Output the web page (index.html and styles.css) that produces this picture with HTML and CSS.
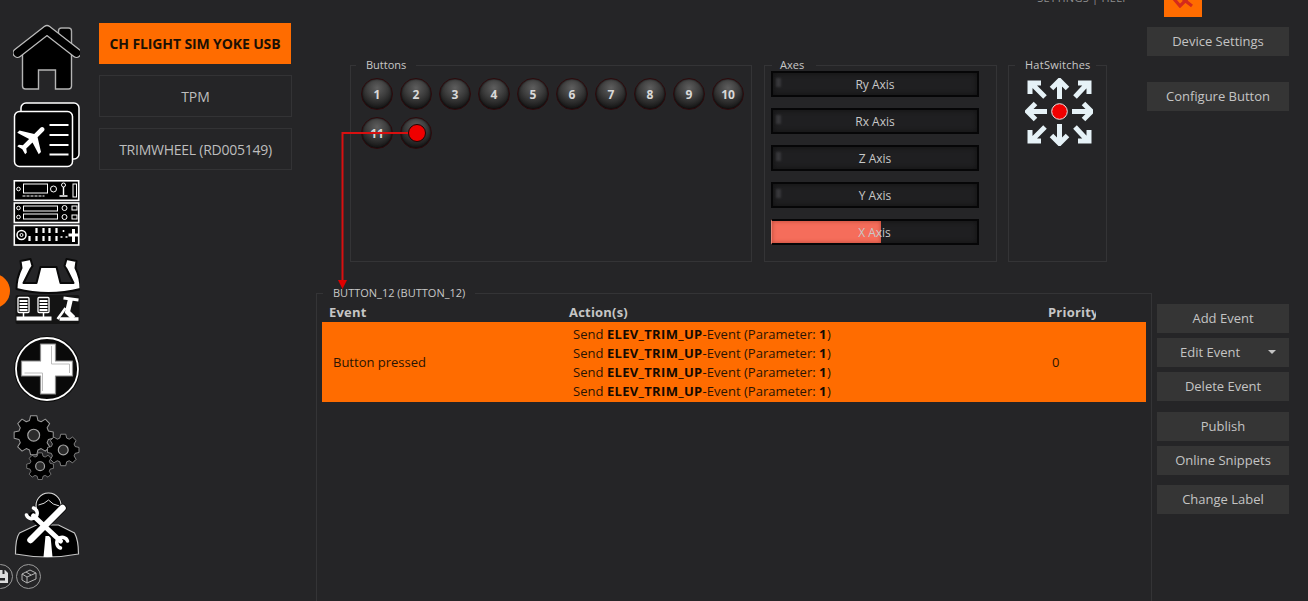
FILE: index.html
```html
<!DOCTYPE html>
<html lang="en">
<head>
<meta charset="utf-8">
<title>Device Settings</title>
<link rel="stylesheet" href="styles.css">
</head>
<body>
<div class="app">
  <span class="badge"></span>
  <nav class="rail">
    <svg class="nav-icon" viewBox="0 0 66 66">
      <rect x="45" y="4" width="13" height="22" rx="3" fill="#000" stroke="#aaa" stroke-width="1.4"/>
      <path d="M9 28 L33.500 10 L58 28 V62 a3 3 0 0 1 -3 3 H42 V46 H25 V65 H12 a3 3 0 0 1 -3 -3 Z" fill="#000" stroke="#b5b5b5" stroke-width="1.4"/>
      <path d="M4 29 L33.500 6 L63 29" fill="none" stroke="#bbb" stroke-width="10" stroke-linecap="round" stroke-linejoin="round"/>
      <path d="M4 29 L33.500 6 L63 29" fill="none" stroke="#000" stroke-width="7.500" stroke-linecap="round" stroke-linejoin="round"/>
    </svg>
    <svg class="nav-icon" viewBox="0 0 66 66">
      <rect x="7.500" y="1" width="58" height="56" rx="5" fill="#000" stroke="#fff" stroke-width="1.500"/>
      <rect x="1" y="9.500" width="58" height="55" rx="5" fill="#000" stroke="#fff" stroke-width="1.500"/>
      <g transform="translate(19 37) rotate(45) scale(1.6) translate(-11.500 -12)"><path fill="#fff" d="M21 16v-2l-8-5V3.500c0-.83-.67-1.500-1.500-1.500S10 2.670 10 3.500V9l-8 5v2l8-2.500V19l-2 1.500V22l3.500-1 3.500 1v-1.500L13 19v-5.500l8 2.500z"/></g>
      <path d="M36 23 H55 M36 33 H55 M36 43 H55 M36 52.500 H55" stroke="#fff" stroke-width="1.800"/>
    </svg>
    <svg class="nav-icon" viewBox="0 0 66 66">
      <g fill="#000" stroke="#fff" stroke-width="1.600">
        <rect x=".8" y=".8" width="64.400" height="19.500"/>
        <rect x=".8" y="23" width="64.400" height="19.500"/>
        <rect x=".8" y="45.500" width="64.400" height="19.500"/>
      </g>
      <g fill="none" stroke="#fff" stroke-width="1">
        <circle cx="5" cy="9" r="1.800"/><rect x="10" y="4" width="24" height="9"/><circle cx="40" cy="9" r="3"/>
        <path d="M50 7 v8 M46 16 h8" stroke-width="1.400"/><circle cx="50" cy="5" r="2"/><rect x="59.500" y="4" width="3.500" height="13"/>
        <path d="M9 16 h22" stroke-dasharray="3 1"/>
        <circle cx="5" cy="28" r="1.800"/><circle cx="5" cy="37" r="1.800"/>
        <rect x="10" y="26" width="34" height="5"/><rect x="10" y="34" width="34" height="5"/>
        <circle cx="51" cy="28" r="2.500"/><circle cx="51" cy="37" r="2.500"/>
        <rect x="58.500" y="26" width="5" height="4"/><rect x="58.500" y="35" width="5" height="4"/>
        <circle cx="8" cy="55" r="4.500" stroke-width="1.500"/><circle cx="8" cy="55" r="1.500"/>
      </g>
      <g stroke="#fff" stroke-width="2.200" fill="none">
        <path d="M23 48 v5 M23 56 v5 M30 48 v5 M30 56 v5 M36 48 v5 M36 56 v5 M43 48 v5 M43 56 v5 M16 56 v5"/>
        <path d="M60 49 v13 M55 55 h10" stroke-width="3"/>
        <path d="M50 50 v2 M47 57 h2 M52 57 h2" stroke-width="1.600"/>
      </g>
    </svg>
    <svg class="nav-icon" viewBox="0 0 66 66">
      <path d="M7 3 L17 1 L19 8 L17 11 L10 25 H23 L27 9 H43 L47 25 H60 L53 11 L51 8 L53 1 L63 3 L62 10 Q67 20 67 31 Q35 39 3 31 Q3 20 8 10 Z" fill="#fff" stroke="#0a0a0a" stroke-width="2" stroke-linejoin="round"/>
      <rect x="2" y="37" width="64" height="29" fill="#0a0a0a" opacity=".65" rx="2"/>
      <g fill="#0a0a0a" stroke="#fff" stroke-width="1.300">
        <rect x="4.500" y="39.500" width="11" height="15" rx="1"/><rect x="24.500" y="39.500" width="11" height="15" rx="1"/>
      </g>
      <g stroke="#fff" fill="none">
        <path d="M6 43 H14 M6 46 H14 M6 49 H14 M6 52 H14 M26 43 H34 M26 46 H34 M26 49 H34 M26 52 H34" stroke-width="1.800"/>
        <path d="M10 54 V60 M30 54 V60" stroke-width="1.500"/>
        <path d="M3 60.500 H38" stroke-width="4"/>
        <path d="M50 40 L65 42" stroke-width="3"/>
        <path d="M57 41 L54 54 L60 60" stroke-width="5"/>
        <path d="M52 50 Q48 56 44 61" stroke-width="2.500"/>
        <path d="M46 61 H65" stroke-width="3.500"/>
      </g>
    </svg>
    <svg class="nav-icon" viewBox="0 0 66 66">
      <circle cx="33.500" cy="33" r="33" fill="#0a0a0a"/>
      <circle cx="33.500" cy="33" r="31" fill="none" stroke="#fff" stroke-width="1.800"/>
      <path d="M27 8 H42 V25 H59 V40 H42 V58 H27 V40 H8 V25 H27 Z" fill="#fff" stroke="#8a8a8a" stroke-width="1.200" stroke-linejoin="round"/>
      <path d="M38 10 V28 H56 V37 M11 37 H29 V55" fill="none" stroke="#bdbdbd" stroke-width="1"/>
    </svg>
    <svg class="nav-icon" viewBox="0 0 67 67">
      <defs>
        <path id="gear" d="M39.500 13.500 42.300 1.600 57.700 1.600 60.500 13.500 68.400 16.800 78.800 10.400 89.600 21.200 83.200 31.600 86.500 39.500 98.400 42.300 98.400 57.700 86.500 60.500 83.200 68.400 89.600 78.800 78.800 89.600 68.400 83.200 60.500 86.500 57.700 98.400 42.300 98.400 39.500 86.500 31.600 83.200 21.200 89.600 10.400 78.800 16.800 68.400 13.500 60.500 1.600 57.700 1.600 42.300 13.500 39.500 16.800 31.600 10.400 21.200 21.200 10.400 31.600 16.800 Z"/>
      </defs>
      <g stroke="#9a9a9a" stroke-width="2.500" stroke-linejoin="round" fill="#000">
        <use href="#gear" transform="translate(0 1) scale(.41)"/>
        <use href="#gear" transform="translate(34 20) scale(.33)"/>
        <use href="#gear" transform="translate(13 39) scale(.28)"/>
      </g>
      <g fill="#2b2b2b" stroke="#a5a5a5" stroke-width="1.200">
        <circle cx="20.500" cy="21.500" r="6"/><circle cx="50.500" cy="36.500" r="5"/><circle cx="27" cy="53" r="4.500"/>
      </g>
    </svg>
    <svg class="nav-icon" viewBox="0 0 66 66">
      <path d="M2 62 Q2 46 6 41 L23 33 H45 L61 41 Q65 48 65 62 Q34 68 2 62 Z" fill="#000" stroke="#c4c4c4" stroke-width="1.200"/>
      <circle cx="35" cy="15" r="14" fill="#000"/>
      <path d="M23 17 A12.500 12.500 0 1 1 47 17" fill="none" stroke="#ddd" stroke-width="1.200"/>
      <path d="M25 13 Q31 12 35 8 Q39 13 46 14" fill="none" stroke="#ddd" stroke-width="1"/>
      <path d="M32 44 H37 L39 65 H30 Z" fill="#fff"/>
      <g fill="none" stroke="#000" stroke-width="8" stroke-linecap="round"><path d="M17 48 L49 16 M19 24 L48 50"/></g>
      <g fill="none" stroke="#fff" stroke-linecap="round">
        <path d="M17 48 L49 16" stroke-width="6.500"/>
        <path d="M20 24 L47 49" stroke-width="5"/>
        <path d="M13 23 A5.500 5.500 0 1 0 20 16" stroke-width="3.500"/>
        <path d="M54 49 A5.500 5.500 0 1 0 47 56" stroke-width="3.500"/>
      </g>
    </svg>
    <div class="mini-row">
      <svg class="mini-icon" viewBox="0 0 25 25">
        <circle cx="12.500" cy="12.500" r="12" fill="none" stroke="#9a9a9a"/>
        <path d="M6 6 H17 L20 9 V19 H6 Z" fill="#ddd"/><rect x="14.500" y="6" width="2" height="4" fill="#252527"/><rect x="8" y="14" width="9" height="2.500" fill="#252527"/>
      </svg>
      <svg class="mini-icon" viewBox="0 0 25 25" fill="none" stroke="#b5b5b5">
        <circle cx="12.500" cy="12.500" r="12" stroke="#9a9a9a"/>
        <path d="M6 10 L14 6 L20 9 V15 L11 19 L6 16 Z M6 10 L11 13 L20 9 M11 13 V19 M10 8 L15 11"/>
      </svg>
    </div>
  </nav>

  <aside class="devices">
    <button class="device device-active">CH FLIGHT SIM YOKE USB</button>
    <button class="device">TPM</button>
    <button class="device device-long">TRIMWHEEL (RD005149)</button>
  </aside>

  <main class="workspace">
    <header class="topbar">
      <span class="top-links">SETTINGS | HELP</span>
      <span class="top-square">
        <svg class="top-mark" viewBox="0 0 22 8"><path d="M2 -1 L8 6 L15 -1 M11 -1 L20 6" fill="none" stroke="#d42a1c" stroke-width="3.200"/></svg>
      </span>
    </header>

    <section class="upper">
      <fieldset class="group group-buttons">
        <legend class="legend legend-buttons">Buttons</legend>
        <div class="joy-grid">
          <span class="joy">1</span><span class="joy">2</span><span class="joy">3</span><span class="joy">4</span><span class="joy">5</span>
          <span class="joy">6</span><span class="joy">7</span><span class="joy">8</span><span class="joy">9</span><span class="joy">10</span>
          <span class="joy">11</span><span class="joy"></span>
        </div>
      </fieldset>

      <fieldset class="group group-axes">
        <legend class="legend legend-axes">Axes</legend>
        <div class="axis-list">
          <div class="axis"><span class="axis-nub"></span><span class="axis-label">Ry Axis</span></div>
          <div class="axis"><span class="axis-nub"></span><span class="axis-label">Rx Axis</span></div>
          <div class="axis"><span class="axis-nub"></span><span class="axis-label">Z Axis</span></div>
          <div class="axis"><span class="axis-nub"></span><span class="axis-label">Y Axis</span></div>
          <div class="axis axis-live"><span class="axis-fill" style="width:53%"></span><span class="axis-label">X Axis</span></div>
        </div>
      </fieldset>

      <fieldset class="group group-hat">
        <legend class="legend legend-hat">HatSwitches</legend>
        <svg class="hat" viewBox="0 0 68 68">
          <g fill="none" stroke="#e6f2f7" stroke-width="5">
            <path d="M34.500 21 V3 M26.500 10.500 L34.500 2.500 L42.500 10.500"/>
            <path d="M34.500 46 V65 M26.500 57.500 L34.500 65.500 L42.500 57.500"/>
            <path d="M22 33.500 H3 M10.500 25.500 L2.500 33.500 L10.500 41.500"/>
            <path d="M47 33.500 H66 M58.500 25.500 L66.500 33.500 L58.500 41.500"/>
            <path d="M20 19 L6 5 M5 16 V5 H16"/>
            <path d="M50 19 L63 5 M64 16 V5 H53"/>
            <path d="M20 49 L6 63 M5 52 V63 H16"/>
            <path d="M50 49 L63 63 M64 52 V63 H53"/>
          </g>
          <circle cx="34.500" cy="33.500" r="7.800" fill="#f00000" stroke="#f0e4e4"/>
        </svg>
      </fieldset>

      <div class="side side-top">
        <button class="tool">Device Settings</button>
        <button class="tool">Configure Button</button>
      </div>
    </section>

    <section class="lower">
      <fieldset class="group group-events">
        <legend class="legend legend-events">BUTTON_12 (BUTTON_12)</legend>
        <div class="event-head">
          <span class="cell-event">Event</span>
          <span class="cell-action">Action(s)</span>
          <span class="cell-priority">Priority</span>
        </div>
        <div class="event-row">
          <span class="row-event">Button pressed</span>
          <div class="row-action">
            <p class="send">Send <b>ELEV_TRIM_UP</b>-Event (Parameter: <b>1</b>)</p>
            <p class="send">Send <b>ELEV_TRIM_UP</b>-Event (Parameter: <b>1</b>)</p>
            <p class="send">Send <b>ELEV_TRIM_UP</b>-Event (Parameter: <b>1</b>)</p>
            <p class="send">Send <b>ELEV_TRIM_UP</b>-Event (Parameter: <b>1</b>)</p>
          </div>
          <span class="row-priority">0</span>
        </div>
      </fieldset>

      <div class="side side-events">
        <button class="tool">Add Event</button>
        <button class="tool tool-menu">Edit Event<span class="caret"></span></button>
        <button class="tool">Delete Event</button>
        <button class="tool tool-gap">Publish</button>
        <button class="tool">Online Snippets</button>
        <button class="tool tool-gap-lg">Change Label</button>
      </div>
    </section>
  </main>

  <svg class="connector" viewBox="0 0 1308 601">
    <path d="M417 133 H342.500 V282" fill="none" stroke="#d81010" stroke-width="2"/>
    <path d="M338 280 H347 L342.500 289 Z" fill="#e00000"/>
    <circle cx="417" cy="133" r="8.500" fill="#f00000" stroke="#200404"/>
  </svg>
</div>
</body>
</html>
```

FILE: styles.css
```css
* { box-sizing: border-box; }

html, body {
  margin: 0;
  height: 100%;
  overflow: hidden;
  background: #252527;
}

body {
  font-family: "Open Sans", "Noto Sans", sans-serif;
  font-size: 13px;
  color: #c6c6c6;
}

button {
  font: inherit;
  color: inherit;
  border: 0;
  padding: 0;
}

.app {
  position: relative;
  display: flex;
  width: 1308px;
  height: 601px;
  overflow: hidden;
}

.badge {
  position: absolute;
  left: -23px;
  top: 274px;
  width: 33px;
  height: 34px;
  border-radius: 50%;
  background: #ff6c00;
}

.connector {
  position: absolute;
  inset: 0;
  width: 1308px;
  height: 601px;
  pointer-events: none;
}

/* left rail */
.rail {
  position: relative;
  flex: 0 0 99px;
  display: flex;
  flex-direction: column;
  gap: 12px;
  padding: 24px 0 0 13px;
}

.nav-icon {
  display: block;
  width: 67px;
  height: 66px;
}

.mini-row {
  display: flex;
  gap: 3px;
  margin: -6px 0 0 -25px;
}

.mini-icon {
  display: block;
  width: 25px;
  height: 25px;
}

/* device list */
.devices {
  flex: 0 0 193px;
  display: flex;
  flex-direction: column;
  gap: 11px;
  padding-top: 23px;
}

.device {
  height: 42px;
  background: transparent;
  border: 1px solid #333335;
  color: #bdbdbd;
  font-size: 14px;
}

.device-long {
  letter-spacing: -.25px;
}

.device-active {
  width: 192px;
  height: 41px;
  background: #ff6c00;
  border-color: #ff6c00;
  color: #1c1004;
  font-weight: 700;
  letter-spacing: -.12px;
}

/* workspace */
.workspace {
  flex: 1;
  min-width: 0;
}

.topbar {
  display: flex;
  justify-content: flex-end;
  height: 17px;
  padding-right: 106px;
  overflow: hidden;
}

.top-links {
  margin: -10px 35px 0 0;
  font-size: 11px;
  line-height: 15px;
  letter-spacing: .25px;
  color: #8d8d8d;
}

.top-square {
  display: flex;
  justify-content: center;
  width: 38px;
  height: 17px;
  background: #ff6c00;
}

.top-mark {
  display: block;
  width: 22px;
  height: 8px;
}

.upper {
  display: flex;
  align-items: flex-start;
  margin-top: 42px;
  padding-left: 58px;
}

.group {
  margin: 0;
  padding: 0;
  min-width: 0;
  border: 1px solid #343436;
}

.legend {
  padding: 0 10px;
  font-size: 11px;
  line-height: 12px;
  color: #c8c8c8;
}

.legend-buttons {
  margin-left: -5px;
}

.legend-axes {
  margin-left: 1px;
  padding: 0 12px 0 8px;
}

.legend-hat {
  margin-left: -10px;
  padding: 0 5px 0 10px;
  letter-spacing: .25px;
}

.legend-events {
  margin-left: 1px;
}

.group-buttons {
  width: 402px;
  height: 203px;
  padding: 7px 0 0 10px;
}

.joy-grid {
  display: grid;
  grid-template-columns: repeat(10, 32px);
  grid-auto-rows: 32px;
  gap: 7px;
}

.joy {
  display: flex;
  align-items: center;
  justify-content: center;
  border-radius: 50%;
  border: 1px solid #2c0a0c;
  background: radial-gradient(circle at 50% 30%, #5e5e5e 0, #3c3c3c 40%, #1c1c1c 72%, #0c0c0c 100%);
  box-shadow: inset 0 0 2px #000;
  color: #d8d8d8;
  font-size: 12px;
  font-weight: 700;
}

.group-axes {
  width: 233px;
  height: 203px;
  margin-left: 12px;
  padding: 0 0 0 6px;
}

.axis-list {
  display: flex;
  flex-direction: column;
  gap: 11px;
}

.axis {
  position: relative;
  display: flex;
  align-items: center;
  justify-content: center;
  width: 208px;
  height: 26px;
  border: 2px solid #060607;
  background: #1f1f21;
  box-shadow: inset 0 0 5px #111;
}

.axis-label {
  position: relative;
  font-size: 12px;
  color: #c8c8c8;
}

.axis-nub {
  position: absolute;
  left: 3px;
  top: 5px;
  width: 5px;
  height: 9px;
  background: #37373a;
  filter: blur(1px);
}

.axis-fill {
  position: absolute;
  left: 0;
  top: 0;
  bottom: 0;
  background: #f56d5b;
  box-shadow: inset 0 0 4px #b84636;
}

.axis-live {
  border-left-color: #e88876;
  border-left-width: 1px;
}

.group-hat {
  width: 99px;
  height: 203px;
  margin-left: 11px;
  padding: 7px 0 0 16px;
}

.hat {
  display: block;
  width: 68px;
  height: 68px;
}

.side {
  display: flex;
  flex-direction: column;
}

.side-top {
  width: 142px;
  margin: -32px 0 0 40px;
  gap: 26px;
}

.tool {
  position: relative;
  height: 29px;
  padding-bottom: 2px;
  background: #353535;
  color: #c4c4c4;
}

.lower {
  display: flex;
  align-items: flex-start;
  margin-top: 25px;
  padding-left: 24px;
}

.group-events {
  width: 836px;
  height: 340px;
  padding: 0 5px 0 5px;
}

.event-head {
  display: grid;
  grid-template-columns: 240px 479px 48px;
  height: 18px;
  margin-top: 5px;
  padding-left: 7px;
  font-weight: 700;
  line-height: 17px;
  letter-spacing: .2px;
}

.cell-priority {
  overflow: hidden;
  white-space: nowrap;
}

.event-row {
  display: grid;
  grid-template-columns: 240px 479px 1fr;
  align-items: center;
  height: 80px;
  padding-left: 11px;
  background: #ff6c00;
  color: #2a1404;
}

.row-action {
  padding-top: 2px;
}

.send {
  margin: 0;
  line-height: 19px;
  letter-spacing: .03px;
}

.send b {
  color: #140a02;
  font-weight: 700;
  letter-spacing: .33px;
}

.side-events {
  width: 132px;
  margin: 17px 0 0 5px;
  gap: 5px;
}

.tool-menu {
  padding-right: 26px;
}

.caret {
  position: absolute;
  right: 13px;
  top: 12px;
  border-left: 4px solid transparent;
  border-right: 4px solid transparent;
  border-top: 4px solid #c4c4c4;
}

.tool-gap {
  margin-top: 6px;
}

.tool-gap-lg {
  margin-top: 5px;
}
```
